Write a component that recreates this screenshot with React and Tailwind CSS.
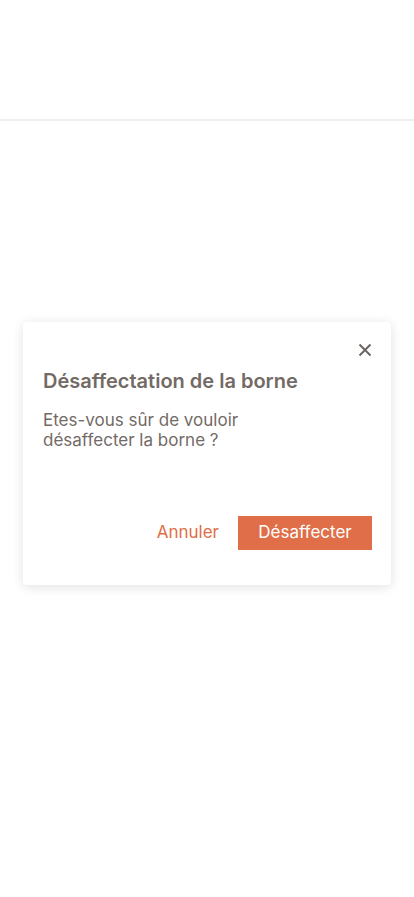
export default function App() {
    return (
        <div className="min-h-screen bg-white" style={{ fontFamily: 'Inter, "Noto Sans", sans-serif' }}>
            {/* Header */}
            <div className="h-[121px] border-b-2 border-[#efefef]"></div>

            {/* Modal */}
            <div className="px-[23px] pt-[201px]">
                <div className="bg-white rounded-[4px] shadow-[0_2px_12px_rgba(0,0,0,0.12)] pl-5 pr-[19px] pt-[21px] pb-[35px]">
                    <div className="flex justify-end pr-[0px]">
                        <svg width="14" height="14" viewBox="0 0 14 14" className="text-[#6b6663]">
                            <path d="M1.5 1.5 L12.5 12.5 M12.5 1.5 L1.5 12.5" stroke="currentColor" strokeWidth="2" />
                        </svg>
                    </div>
                    <h2 className="mt-[12px] text-[20px] font-semibold text-[#736a66] leading-6">
                        Désaffectation de la borne
                    </h2>
                    <p className="mt-[17px] text-[17px] text-[#736a66] leading-5 w-[200px]">
                        Etes-vous sûr de vouloir désaffecter la borne ?
                    </p>
                    <div className="mt-[66px] flex justify-end items-center gap-[19px]">
                        <button className="text-[17px] text-[#e06e48] px-0">Annuler</button>
                        <button className="bg-[#e06e48] text-white text-[17px] h-[34px] w-[134px]">Désaffecter</button>
                    </div>
                </div>
            </div>
        </div>
    )
}
